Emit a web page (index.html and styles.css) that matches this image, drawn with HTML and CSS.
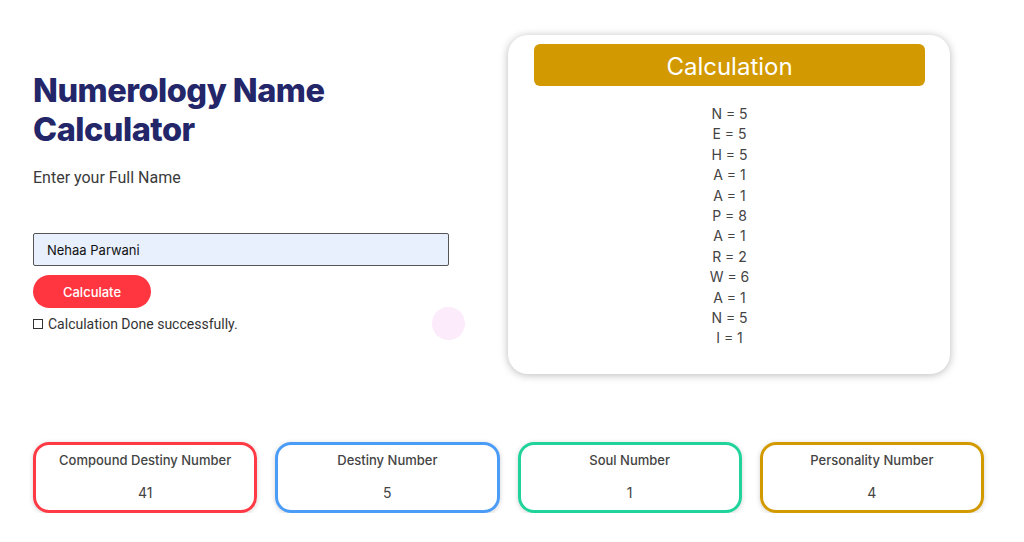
FILE: index.html
```html
<!DOCTYPE html>
<html lang="en">
<head>
    <meta charset="UTF-8">
    <meta name="viewport" content="width=device-width, initial-scale=1.0">
    <title>Numerology Name Calculator</title>
    <link rel="stylesheet" href="styles.css">
</head>
<body>
    <div class="page">
        <div class="top-row">
            <div class="form-col">
                <h1 class="title">Numerology Name<br>Calculator</h1>
                <p class="label">Enter your Full Name</p>
                <input class="name-input" type="text" value="Nehaa Parwani">
                <button class="calc-btn">Calculate</button>
                <div class="status"><span class="box"></span>Calculation Done successfully.</div>
                <span class="ripple"></span>
            </div>
            <div class="calc-card">
                <div class="calc-head">Calculation</div>
                <ul class="letters">
                    <li>N = 5</li>
                    <li>E = 5</li>
                    <li>H = 5</li>
                    <li>A = 1</li>
                    <li>A = 1</li>
                    <li>P = 8</li>
                    <li>A = 1</li>
                    <li>R = 2</li>
                    <li>W = 6</li>
                    <li>A = 1</li>
                    <li>N = 5</li>
                    <li>I = 1</li>
                </ul>
            </div>
        </div>

        <div class="results">
            <div class="result red">
                <div class="result-name">Compound Destiny Number</div>
                <div class="result-value">41</div>
            </div>
            <div class="result blue">
                <div class="result-name">Destiny Number</div>
                <div class="result-value">5</div>
            </div>
            <div class="result green">
                <div class="result-name">Soul Number</div>
                <div class="result-value">1</div>
            </div>
            <div class="result gold">
                <div class="result-name">Personality Number</div>
                <div class="result-value">4</div>
            </div>
        </div>
    </div>
</body>
</html>
```

FILE: styles.css
```css
body {
    margin: 0;
    background: #fff;
    font-family: 'Inter', 'Roboto', sans-serif;
    color: #333;
}

.page {
    padding: 35px 40px 0 33px;
}

.top-row {
    display: grid;
    grid-template-columns: 475px 1fr;
}

/* Left: form */
.form-col {
    position: relative;
    padding-top: 36px;
}

.title {
    margin: 0;
    font-size: 32.5px;
    line-height: 39px;
    font-weight: 800;
    letter-spacing: -0.5px;
    color: #24266a;
}

.label {
    margin: 19px 0 0;
    font-family: 'Roboto', sans-serif;
    font-size: 16px;
    line-height: 20px;
    color: #3a3a3a;
}

.name-input {
    display: block;
    box-sizing: border-box;
    width: 416px;
    height: 33px;
    margin-top: 45px;
    padding: 0 13px;
    background: #e8f0fe;
    border: 1px solid #555;
    border-radius: 2px;
    font-family: 'Inter', sans-serif;
    font-size: 13px;
    color: #111;
}

.calc-btn {
    display: block;
    width: 118px;
    height: 33px;
    margin-top: 9px;
    border: none;
    border-radius: 17px;
    background: #ff3640;
    color: #fff;
    font-family: 'Inter', sans-serif;
    font-size: 13px;
    font-weight: 500;
}

.status {
    display: flex;
    align-items: center;
    margin-top: 8px;
    font-family: 'Roboto', sans-serif;
    font-size: 14px;
    color: #333;
}

.box {
    width: 8px;
    height: 8px;
    border: 1px solid #333;
    margin-right: 5px;
}

.ripple {
    position: absolute;
    left: 399px;
    top: 272px;
    width: 33px;
    height: 33px;
    border-radius: 50%;
    background: #fcebfb;
}

/* Right: calculation card */
.calc-card {
    width: 442px;
    height: 339px;
    box-sizing: border-box;
    padding: 9px 25px 0 26px;
    background: #fff;
    border-radius: 20px;
    box-shadow: 0 1px 8px rgba(0, 0, 0, 0.28);
}

.calc-head {
    height: 42px;
    box-sizing: border-box;
    padding-top: 2px;
    line-height: 42px;
    background: #d29900;
    border-radius: 6px;
    color: #fff;
    text-align: center;
    font-size: 24px;
}

.letters {
    list-style: none;
    margin: 18px 0 0;
    padding: 0;
    text-align: center;
    font-size: 14px;
    line-height: 20.4px;
    color: #444;
}

/* Result cards */
.results {
    display: grid;
    grid-template-columns: repeat(4, 1fr);
    gap: 18px;
    margin-top: 68px;
}

.result {
    height: 71px;
    box-sizing: border-box;
    border: 3px solid;
    border-radius: 16px;
    text-align: center;
    box-shadow: 0 1px 5px rgba(0, 0, 0, 0.18);
    padding-top: 7px;
}

.result-name {
    font-size: 13px;
    font-weight: 500;
    color: #444;
}

.result-value {
    margin-top: 16px;
    font-size: 14px;
    color: #444;
}

.red { border-color: #ff3a44; }
.blue { border-color: #4b9cf6; }
.green { border-color: #1fd39b; }
.gold { border-color: #d39a00; }
```
